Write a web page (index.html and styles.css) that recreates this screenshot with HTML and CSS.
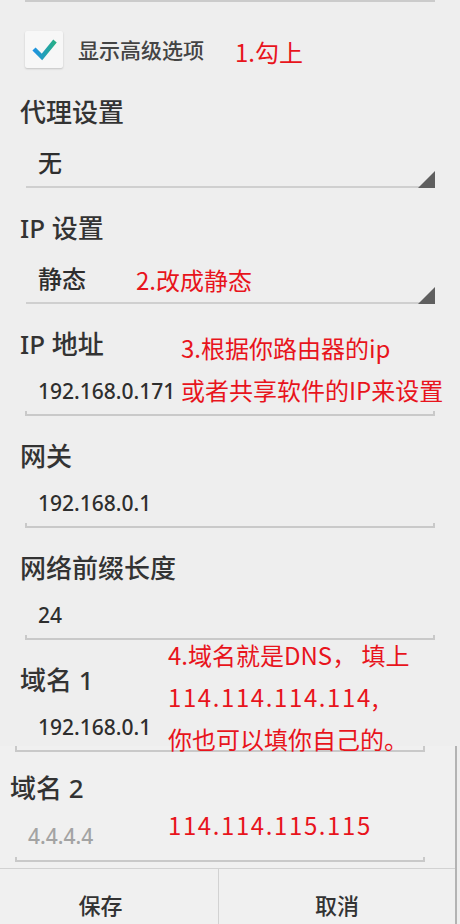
FILE: index.html
```html
<!DOCTYPE html>
<html lang="zh-CN">

<head>
  <meta charset="UTF-8">
  <meta name="viewport" content="width=device-width, initial-scale=1.0">
  <title>高级选项</title>
  <link rel="stylesheet" href="styles.css">
</head>

<body>
  <div class="screen">
    <!-- end of the field above -->
    <div class="top-line"></div>

    <!-- Advanced options checkbox -->
    <div class="check-row">
      <span class="checkbox">
        <svg width="38" height="37" viewBox="0 0 38 37">
          <defs>
            <linearGradient id="tick" x1="0" y1="0" x2="1" y2="0">
              <stop offset="0" stop-color="#1f93e3" />
              <stop offset="1" stop-color="#27ae86" />
            </linearGradient>
          </defs>
          <polyline points="9,18 17,26 30,10" fill="none" stroke="url(#tick)" stroke-width="4.5" />
        </svg>
      </span>
      <span class="check-label">显示高级选项</span>
      <span class="note note-inline">1.勾上</span>
    </div>

    <!-- Proxy -->
    <div class="field spinner">
      <div class="field-label">代理设置</div>
      <div class="field-value cjk">无</div>
      <div class="spin-line"></div>
    </div>

    <!-- IP settings -->
    <div class="field spinner">
      <div class="field-label">IP 设置</div>
      <div class="field-value cjk">静态<span class="note note-value">2.改成静态</span></div>
      <div class="spin-line"></div>
    </div>

    <div class="field">
      <div class="field-label">IP 地址</div>
      <div class="field-value">192.168.0.171</div>
      <div class="edit-line"></div>
      <div class="note note-ip">3.根据你路由器的ip<br>或者共享软件的IP来设置</div>
    </div>

    <div class="field">
      <div class="field-label">网关</div>
      <div class="field-value">192.168.0.1</div>
      <div class="edit-line"></div>
    </div>

    <div class="field">
      <div class="field-label">网络前缀长度</div>
      <div class="field-value">24</div>
      <div class="edit-line"></div>
    </div>

    <div class="field">
      <div class="field-label">域名 1</div>
      <div class="field-value">192.168.0.1</div>
      <div class="note note-dns">4.域名就是DNS，&nbsp;填上<br><span class="num">114.114.114.114,</span><br>你也可以填你自己的。</div>
    </div>

    <!-- Lower part of the dialog -->
    <div class="panel">
      <div class="edit-line"></div>
      <div class="field">
        <div class="field-label">域名 2</div>
        <div class="field-value hint">4.4.4.4</div>
        <div class="edit-line"></div>
        <div class="note note-dns2"><span class="num">114.114.115.115</span></div>
      </div>

      <div class="buttons">
        <div class="btn btn-save">保存</div>
        <div class="btn">取消</div>
      </div>
    </div>
  </div>
</body>

</html>
```

FILE: styles.css
```css
* {
  box-sizing: border-box;
}

body {
  margin: 0;
  background-color: #eeeeee;
  color: #333333;
  font-family: "Noto Sans", "Noto Sans CJK SC", sans-serif;
  overflow: hidden;
}

.screen {
  position: relative;
  width: 460px;
  height: 924px;
}

.top-line {
  margin: 0 25px;
  height: 2px;
  background-color: #cbcbcb;
}

/* Checkbox row */
.check-row {
  display: flex;
  align-items: center;
  height: 70px;
  padding: 28px 0 4px 25px;
}

.checkbox {
  display: flex;
  width: 38px;
  height: 37px;
  background-color: #f7f7f7;
  border-radius: 2px;
  box-shadow: 0 1px 2px rgba(0, 0, 0, 0.18);
}

.check-label {
  margin-left: 15px;
  font-size: 21px;
  font-weight: 500;
  color: #444444;
}

/* Red notes */
.note {
  color: #e8141c;
  font-family: "Noto Sans CJK SC", sans-serif;
  font-size: 24px;
  font-weight: 400;
  line-height: 42px;
  white-space: nowrap;
}

.note .num {
  letter-spacing: 1.6px;
}

.note-inline {
  margin: 6px 0 0 31px;
}

.note-value {
  margin: 6px 0 0 50px;
}

.note-ip {
  position: absolute;
  top: 23px;
  left: 181px;
}

.note-dns {
  position: absolute;
  top: -6px;
  left: 168px;
}

.note-dns2 {
  position: absolute;
  top: 52px;
  left: 168px;
}

/* Fields */
.field {
  position: relative;
  padding-top: 22px;
}

.field-label {
  margin-left: 20px;
  font-size: 26px;
  font-weight: 500;
  line-height: 36px;
  color: #333333;
}

.field-value {
  display: flex;
  align-items: center;
  margin: 11px 0 0 38px;
  height: 36px;
  font-size: 21px;
  font-weight: 500;
  color: #2e2e2e;
}

.field-value.cjk {
  font-size: 24px;
}

.spinner .field-value {
  height: 40px;
}

.field-value.hint {
  color: #a3a3a3;
}

.edit-line {
  margin: 2px 25px 0;
  height: 5px;
  border: 2px solid #c9c9c9;
  border-top: none;
}

.spin-line {
  position: relative;
  margin: 5px 25px 0 26px;
  height: 2px;
  background-color: #cfcfcf;
}

.spin-line:after {
  content: "";
  position: absolute;
  right: 0;
  bottom: 0;
  border-left: 17px solid transparent;
  border-bottom: 17px solid #5f5f5f;
}

/* Bottom panel */
.panel {
  width: 457px;
  background-color: #f0f0f0;
  border-right: 2px solid #b3b3b3;
}

.panel > .edit-line {
  margin: 1px 30px 0 15px;
  height: 6px;
}

.panel .field {
  padding-top: 18px;
}

.panel .field-label {
  margin-left: 10px;
}

.panel .field-value {
  margin: 12px 0 0 28px;
}

.panel .field .edit-line {
  margin: 3px 30px 0 15px;
}

.buttons {
  display: grid;
  grid-template-columns: 219px 1fr;
  margin-top: 6px;
  border-top: 1px solid #d2d2d2;
}

.btn {
  height: 55px;
  padding-top: 24px;
  font-size: 22px;
  font-weight: 500;
  line-height: 24px;
  text-align: center;
  color: #333333;
}

.btn-save {
  padding-right: 17px;
  border-right: 1px solid #d2d2d2;
}
```
